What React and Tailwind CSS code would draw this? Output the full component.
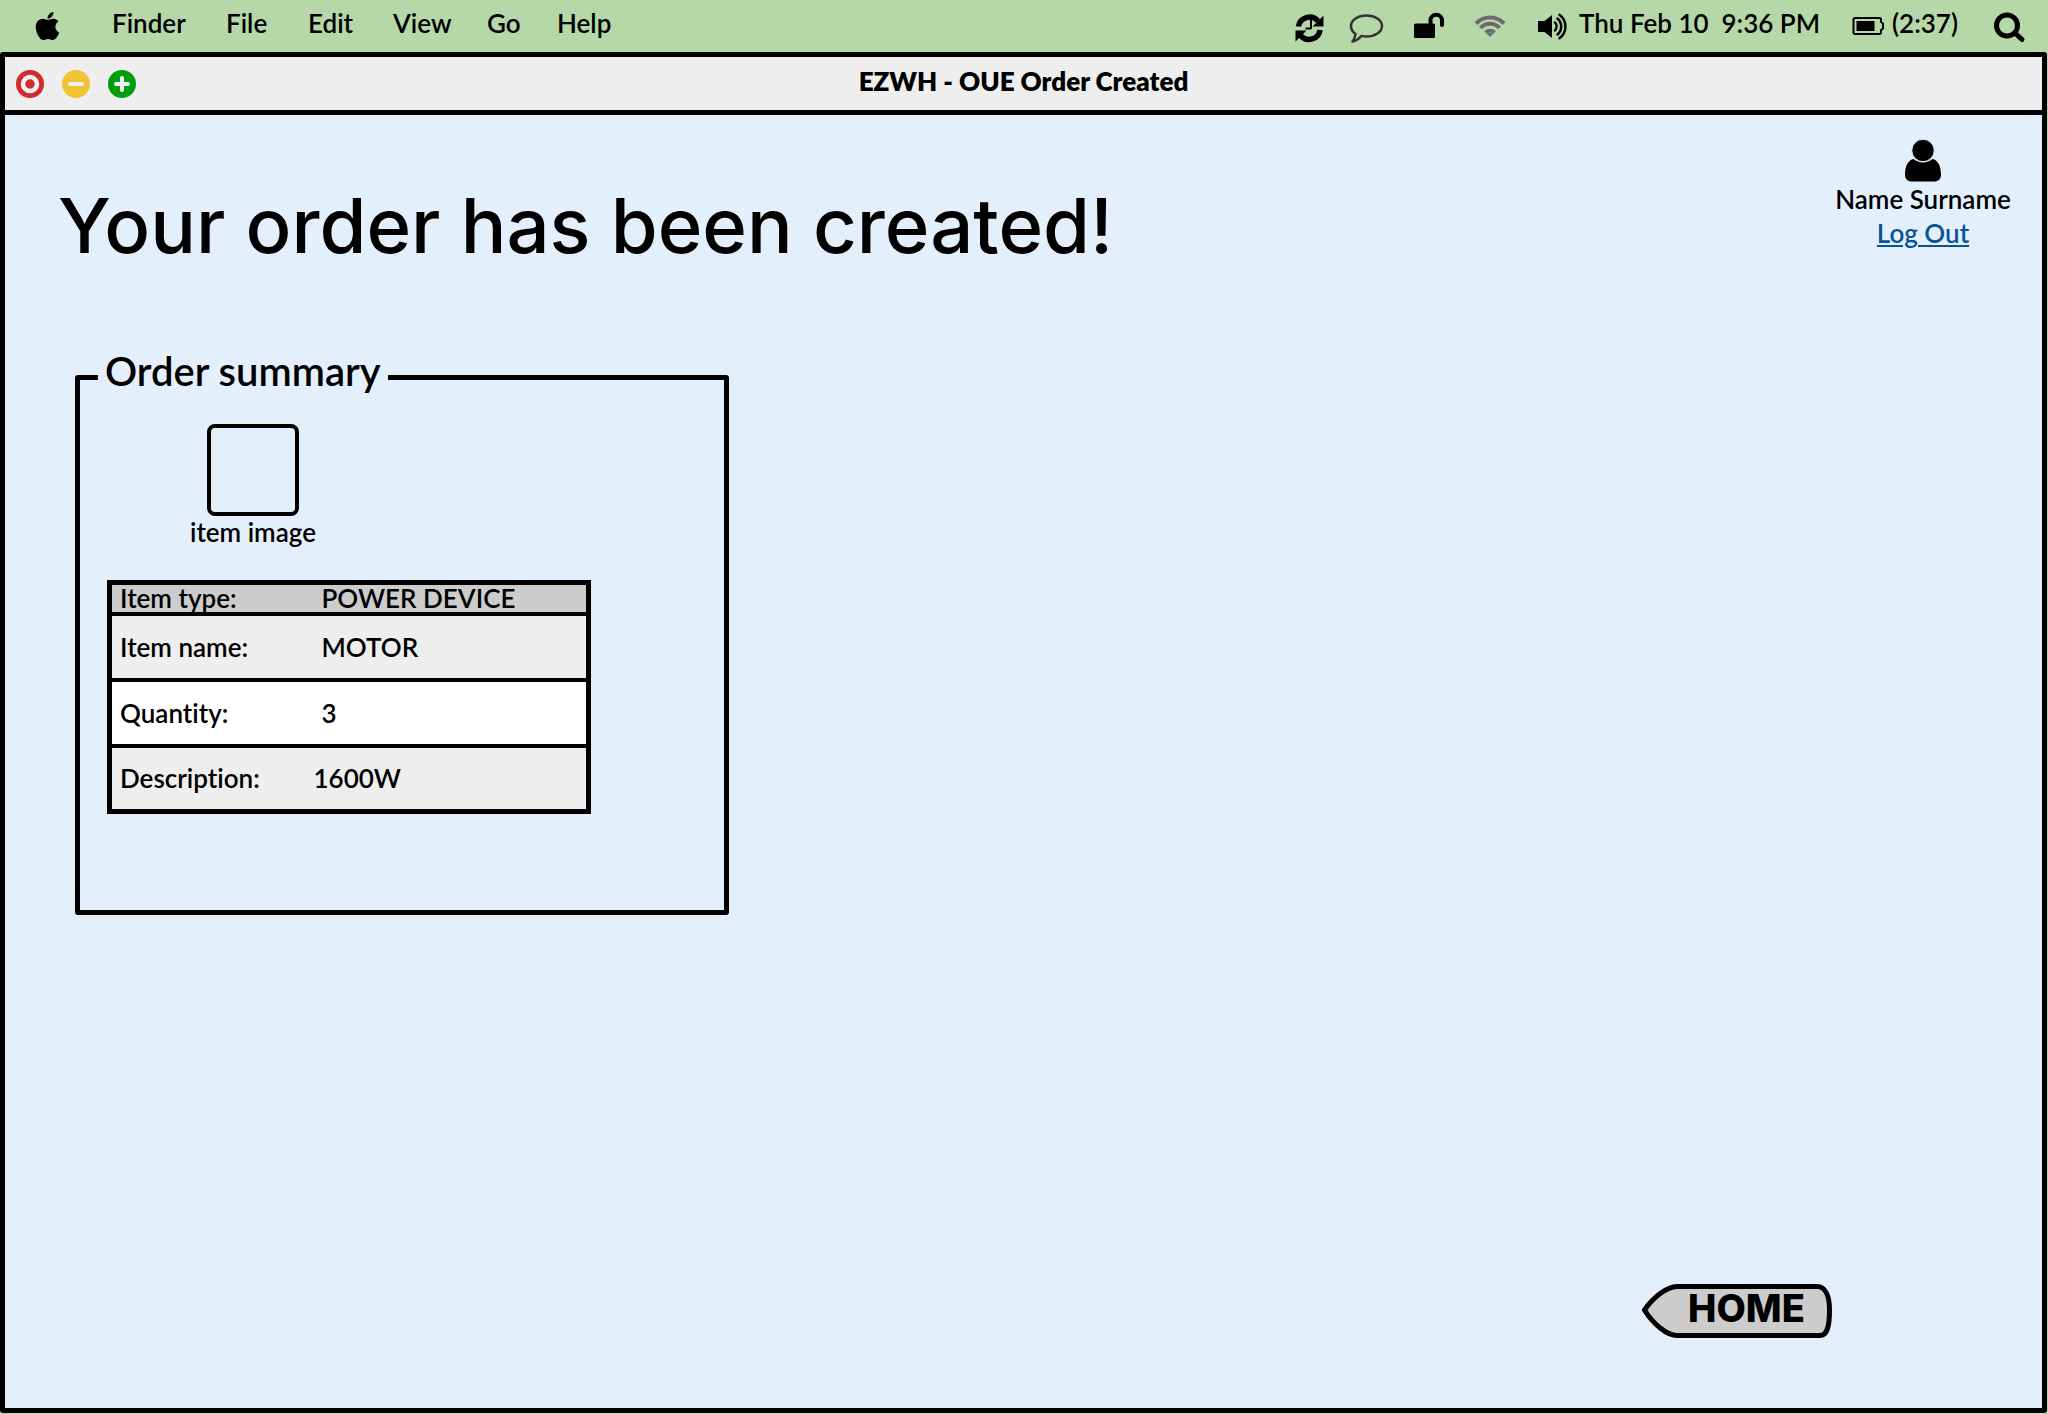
import { FaApple } from "react-icons/fa";

const menus = [
  { label: "Finder", width: "w-[114px]" },
  { label: "File", width: "w-[82px]" },
  { label: "Edit", width: "w-[85px]" },
  { label: "View", width: "w-[94px]" },
  { label: "Go", width: "w-[70px]" },
  { label: "Help", width: "w-[76px]" },
];

const rows = [
  { label: "Item type:", value: "POWER DEVICE", row: "h-[31px] bg-[#cccccc]", cell: "pl-3" },
  { label: "Item name:", value: "MOTOR", row: "h-[66px] bg-[#eeeeee]", cell: "pl-3" },
  { label: "Quantity:", value: "3", row: "h-[66px] bg-white", cell: "pl-3" },
  { label: "Description:", value: "1600W", row: "h-[66px] bg-[#eeeeee]", cell: "pl-1" },
];

function StatusIcon({ label, children }) {
  return (
    <button type="button" aria-label={label} className="h-[52px] w-[38px]">
      <svg viewBox="0 0 38 52" className="h-[52px] w-[38px] overflow-visible" fill="none" stroke="black">
        {children}
      </svg>
    </button>
  );
}

function MenuBar() {
  return (
    <header className="flex h-[52px] items-center justify-between pl-[34px] pr-5">
      <nav className="flex items-center">
        <button type="button" aria-label="Apple menu" className="w-[78px]">
          <FaApple className="h-[32px] w-[27px]" />
        </button>
        {menus.map((m) => (
          <button key={m.label} type="button" className={`${m.width} pb-1.5 text-left`}>
            {m.label}
          </button>
        ))}
      </nav>
      <div className="flex items-center">
        <div className="flex gap-6">
          <StatusIcon label="Sync">
            <path d="M13.5 26.5a11 10.5 0 0 1 19.5-5.5M35 30a11 10.5 0 0 1-19.5 5.5" strokeWidth="5.5" />
            <path d="M38.5 15.5v11H27.5zM10.5 41.5v-11h11z" fill="black" stroke="none" />
            <path d="M26 19v10M26 28.5h-5.5" strokeWidth="2" />
          </StatusIcon>
          <StatusIcon label="Messages">
            <path
              d="M19.5 15.5c8.5 0 15.5 4.7 15.5 10.5s-7 10.5-15.5 10.5c-1.700 0-3.400-.2-5-.6-2.300 2.600-5 4.900-9 5.700 1.500-2 2.700-4.300 3-7.600C5.600 32 4 29.100 4 26c0-5.800 7-10.500 15.500-10.500z"
              stroke="#333333"
              strokeWidth="2.5"
              strokeLinejoin="round"
            />
          </StatusIcon>
          <StatusIcon label="Unlocked">
            <rect x="5" y="23.5" width="21" height="14.5" rx="1.5" fill="black" stroke="none" />
            <path d="M21.5 25v-4.500a5.750 5.750 0 0 1 11.500 0V25" strokeWidth="4" strokeLinecap="round" />
          </StatusIcon>
          <StatusIcon label="Wi-Fi">
            <g stroke="#6b6b6b" strokeWidth="4">
              <path d="M5 23.500a19.500 19.500 0 0 1 28 0M9.500 28a13 13 0 0 1 19 0M14.500 32.500a6.500 6.500 0 0 1 9 0" />
              <path d="M19 37l-3-3a4.500 4.500 0 0 1 6 0z" fill="#6b6b6b" stroke="none" />
            </g>
          </StatusIcon>
          <StatusIcon label="Volume">
            <path d="M5 21h6.500l7.500-6v23l-7.500-6H5z" fill="black" stroke="none" />
            <path
              d="M22 22.500a6 6 0 0 1 0 8M24.500 18.500a10.500 10.500 0 0 1 0 16M26.500 14.800a14.500 14.500 0 0 1 0 23.400"
              strokeWidth="2.5"
              strokeLinecap="round"
            />
          </StatusIcon>
        </div>
        <time className="ml-2 whitespace-pre pb-1.5">{"Thu Feb 10  9:36 PM"}</time>
        <div className="ml-8 flex items-center">
          <svg viewBox="0 0 34 18" className="h-[18px] w-[34px]" fill="none" stroke="black" aria-hidden="true">
            <path
              d="M3 1h24.500c1 0 1.500.5 1.500 1.500V5l2 1.500v5L29 13v2.500c0 1-.5 1.500-1.500 1.500H3c-1 0-1.500-.5-1.500-1.500v-13C1.500 1.500 2 1 3 1z"
              strokeWidth="2"
              strokeLinejoin="round"
            />
            <rect x="4.5" y="4" width="18" height="10" fill="black" stroke="none" />
          </svg>
          <span className="ml-1.5 pb-1.5">(2:37)</span>
        </div>
        <div className="ml-8 flex">
          <StatusIcon label="Search">
            <circle cx="17" cy="25.5" r="10.5" strokeWidth="5" />
            <path d="M25 33l7 6.500" strokeWidth="5" strokeLinecap="round" />
          </StatusIcon>
        </div>
      </div>
    </header>
  );
}

function TitleBar() {
  return (
    <div className="grid h-[58px] grid-cols-[1fr_auto_1fr] items-center border-b-[5px] border-black bg-[#eeeeee]">
      <div className="flex gap-[18px] pl-[11px]">
        <button type="button" aria-label="Close">
          <svg viewBox="0 0 28 28" className="size-7">
            <circle cx="14" cy="14" r="14" fill="#d22b2b" />
            <circle cx="14" cy="14" r="7" fill="none" stroke="#eeeeee" strokeWidth="4.5" />
          </svg>
        </button>
        <button type="button" aria-label="Minimize">
          <svg viewBox="0 0 28 28" className="size-7">
            <circle cx="14" cy="14" r="14" fill="#f1c232" />
            <path d="M8 14h12" stroke="#eeeeee" strokeWidth="4" strokeLinecap="round" />
          </svg>
        </button>
        <button type="button" aria-label="Zoom">
          <svg viewBox="0 0 28 28" className="size-7">
            <circle cx="14" cy="14" r="14" fill="#009e0f" />
            <path d="M8 14h12M14 8v12" stroke="#eeeeee" strokeWidth="4" strokeLinecap="round" />
          </svg>
        </button>
      </div>
      <h2 className="pb-1.5 font-extrabold">EZWH - OUE Order Created</h2>
    </div>
  );
}

function UserPanel() {
  return (
    <div className="flex w-[182px] shrink-0 flex-col items-center leading-[34px]">
      <svg viewBox="0 0 36 43" className="h-[43px] w-9" aria-hidden="true">
        <path d="M8.5 20c-5 .8-8.500 6.500-8.500 15.500 0 4.500 2.500 7 7 7h22c4.500 0 7-2.500 7-7 0-9-3.500-14.700-8.500-15.500-5 4.500-14 4.500-19 0z" />
        <circle cx="18" cy="11.5" r="11.2" stroke="#e3f0fc" strokeWidth="1" />
      </svg>
      <span>Name Surname</span>
      <a href="#logout" className="text-[#0b5394] underline decoration-2 underline-offset-2">
        Log Out
      </a>
    </div>
  );
}

function OrderSummary() {
  return (
    <fieldset className="ml-[70px] mt-[77px] w-[654px] max-w-full rounded-[3px] border-[5px] border-black pb-24 pt-[17px]">
      <legend className="ml-[18px] px-[7px] pb-3 text-[40px] leading-[48px]">Order summary</legend>
      <figure className="ml-20 flex w-[186px] flex-col items-center">
        <div className="size-[92px] rounded-lg border-4 border-black" />
        <figcaption>item image</figcaption>
      </figure>
      <table className="ml-[27px] mt-8 w-[484px] border-collapse border-[5px] border-black leading-6">
        <tbody>
          {rows.map((r) => (
            <tr key={r.label} className={`${r.row} border-b-4 border-black`}>
              <th scope="row" className="w-[200px] p-0 pl-2 text-left font-semibold">
                {r.label}
              </th>
              <td className={`p-0 ${r.cell}`}>{r.value}</td>
            </tr>
          ))}
        </tbody>
      </table>
    </fieldset>
  );
}

function HomeButton() {
  return (
    <button
      type="button"
      className="relative mb-[70px] mr-[210px] mt-auto flex h-[54px] w-[190px] items-center self-end pb-1.5 pl-[46px] font-[Inter,sans-serif] text-[38px] font-extrabold"
    >
      <svg viewBox="0 0 190 54" className="absolute inset-0 h-full w-full" aria-hidden="true">
        <path
          d="M2.5 26C11 13.5 25 2.5 35 2.5H175C183.5 2.5 187.5 12 187.5 26C187.5 43 185 51.5 178 51.5H35C25 51.5 11 40 2.5 26Z"
          fill="#cccccc"
          stroke="black"
          strokeWidth="5"
          strokeLinejoin="round"
        />
      </svg>
      <span className="relative">HOME</span>
    </button>
  );
}

export default function App() {
  return (
    <div className="flex min-h-screen flex-col bg-[#b6d7a8] font-[Lato,sans-serif] text-[26px] font-semibold leading-8 text-black [font-variant-ligatures:none]">
      <MenuBar />
      <main className="mb-px mr-px flex flex-1 flex-col rounded-[3px] border-[5px] border-black bg-[#e3f0fc]">
        <TitleBar />
        <div className="flex items-start justify-between pl-[53px] pr-7 pt-6">
          <h1 className="mt-[41px] font-[Inter,sans-serif] text-[76px] font-medium leading-[90px]">
            Your order has been created!
          </h1>
          <UserPanel />
        </div>
        <OrderSummary />
        <HomeButton />
      </main>
    </div>
  );
}
